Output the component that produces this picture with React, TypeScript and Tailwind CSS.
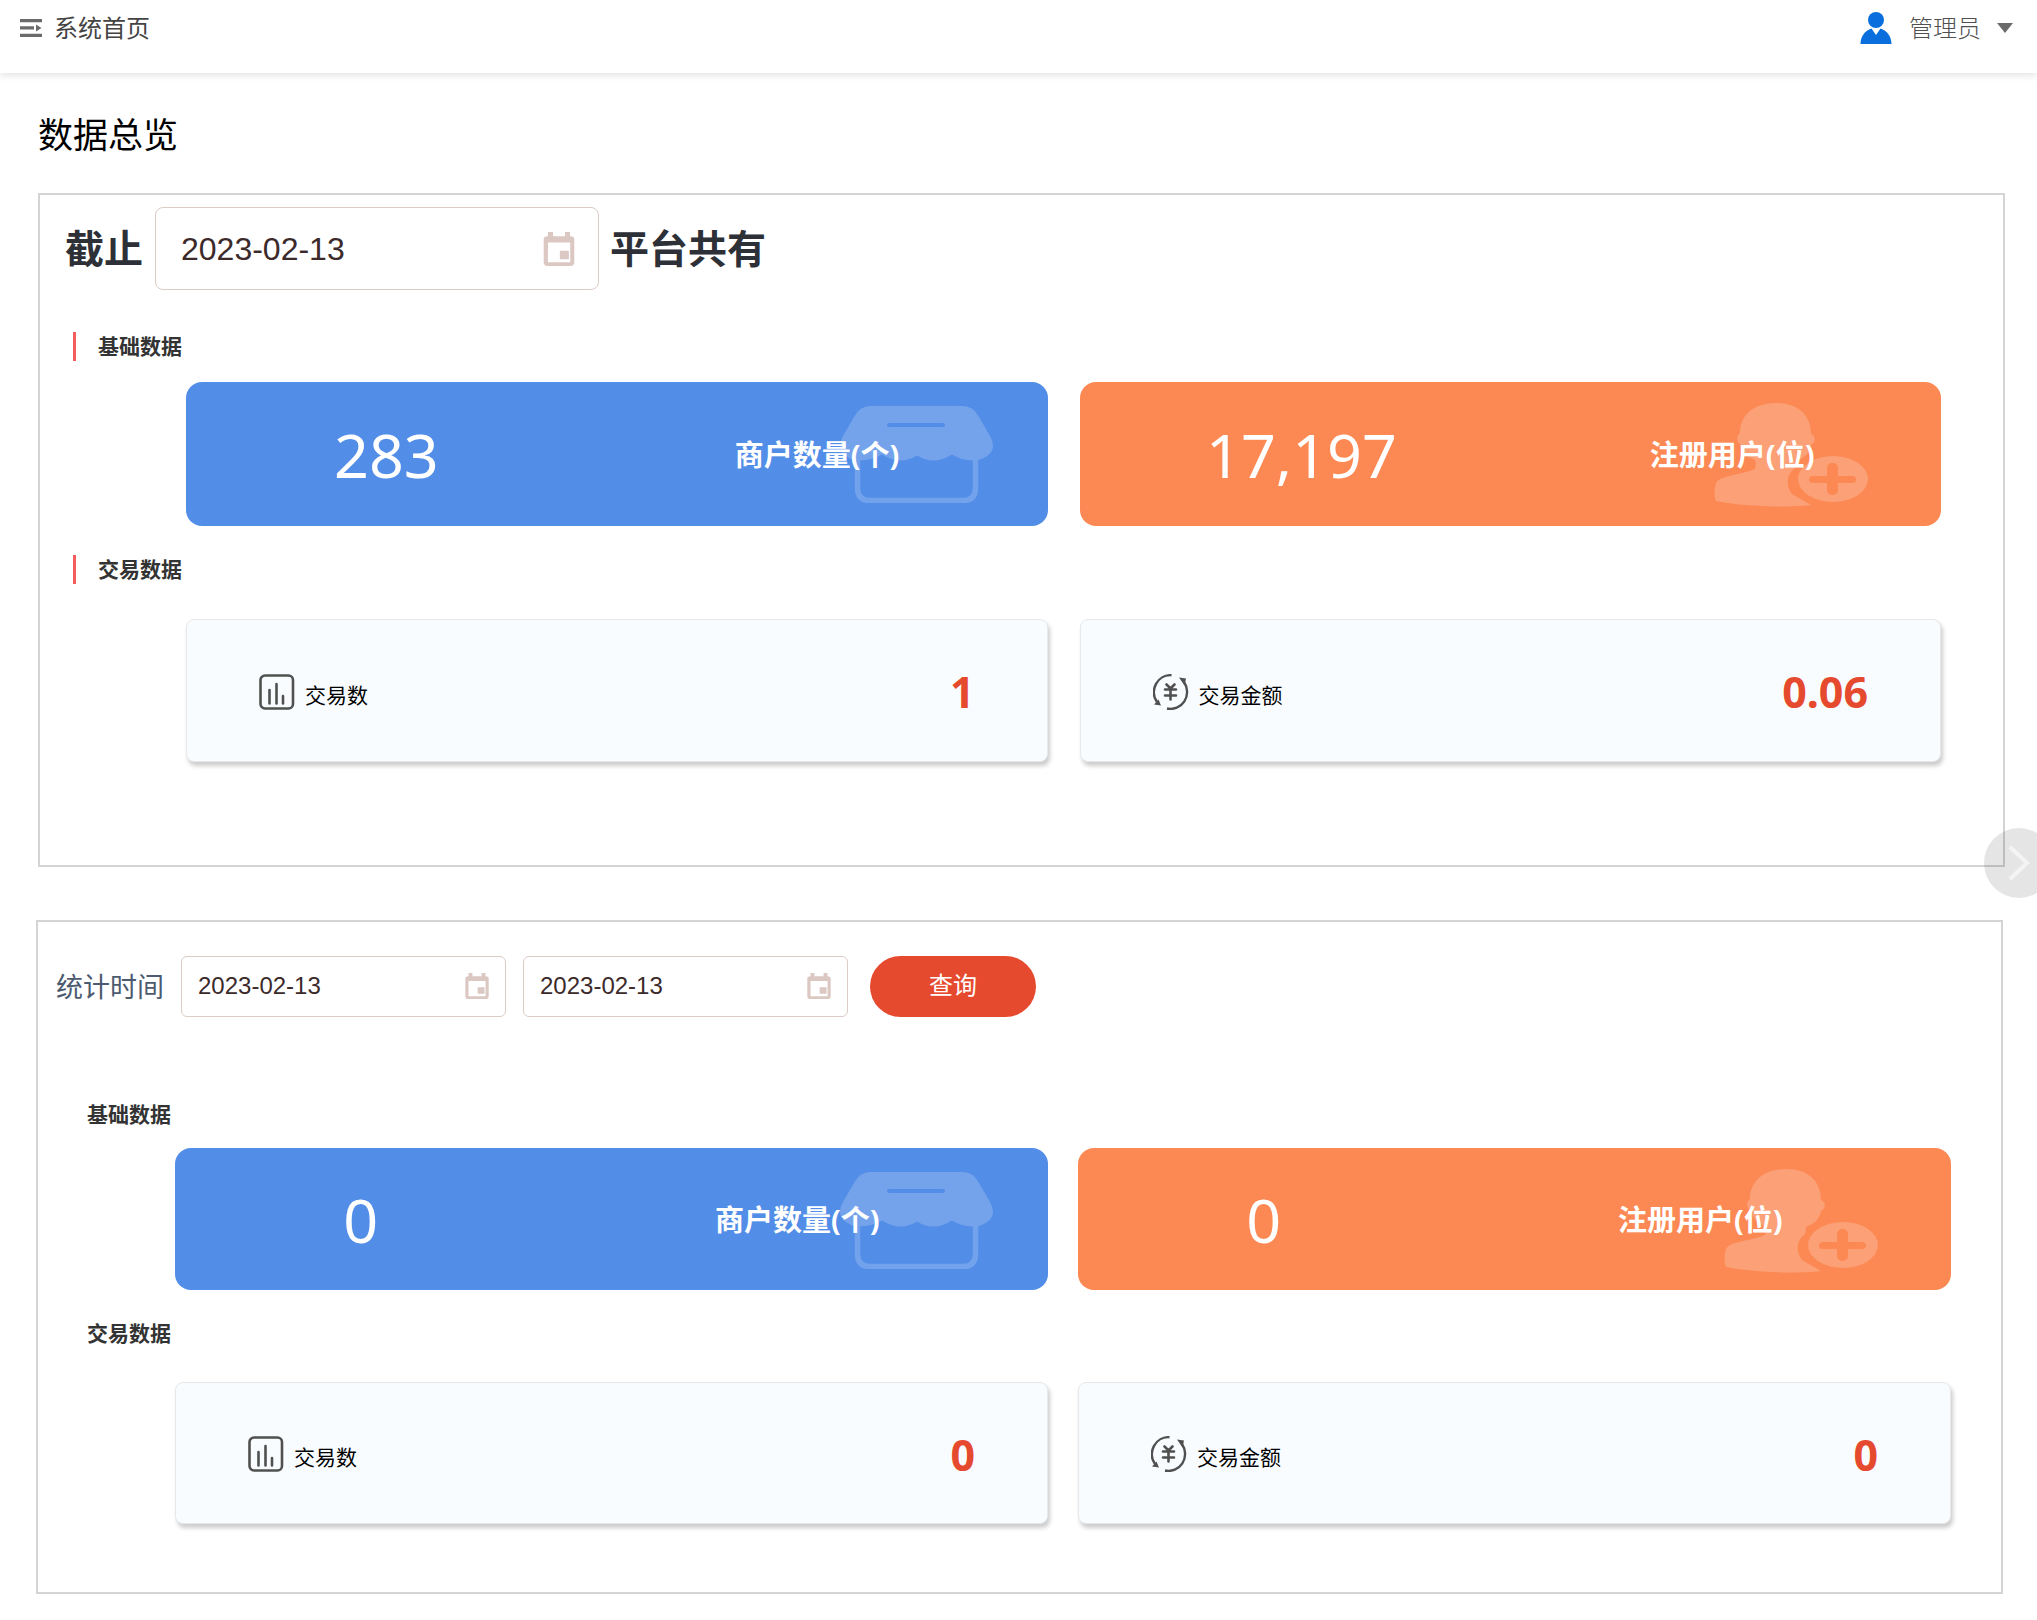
import { useState } from "react";

function MenuIcon() {
  return (
    <svg width="22" height="18" viewBox="0 0 22 18" fill="#6b6b6b" aria-hidden="true">
      <path d="M0 0h22v3.300H0zM0 7.300h14v3.300H0zM0 14.700h22V18H0zM16 5.500l5.500 3.500-5.500 3.500z" />
    </svg>
  );
}

function AvatarIcon() {
  return (
    <svg width="32" height="32" viewBox="0 0 32 32" fill="#0a6fdc" aria-hidden="true">
      <circle cx="16" cy="8" r="8" />
      <path d="M.5 32C.5 24.500 5 18.500 11.500 16.500L16 23l4.500-6.500C27 18.500 31.500 24.500 31.500 32z" />
    </svg>
  );
}

function CalendarIcon({ className }: { className: string }) {
  return (
    <svg className={className} viewBox="3 1 18 20" fill="#dcc8c2" aria-hidden="true">
      <path d="M17.800 12h-5.300v5h5.300zM15.500 1v2.500h-7V1H5.500v2.500H5c-1.100 0-2 .7-2 1.800V19c0 1.100.9 2 2 2h14c1.100 0 2-.9 2-2V5.300c0-1.100-.9-1.800-2-1.800h-.5V1zm3.100 17.800H5.500V7.200h13.100z" />
    </svg>
  );
}

function ShopArt() {
  return (
    <svg
      className="absolute top-6 right-[55px] h-[97px] w-[153px]"
      viewBox="0 0 153 97"
      aria-hidden="true"
    >
      <path
        d="M17.500 48V82Q17.500 94.500 30 94.500H123Q135.500 94.500 135.500 82V48"
        fill="none"
        stroke="#72a2eb"
        strokeWidth="5.500"
      />
      <path
        d="M30 0H123Q133 0 139 11L150 30Q153 35 153 40Q153 49 139 54Q124 56 112 48.500Q94 60 77 49.500Q60 60 42 48.500Q28 56 14 54Q0 49 0 40Q0 35 3 30L14 11Q20 0 30 0z"
        fill="#74a3ec"
      />
      <rect x="47" y="17" width="58" height="4" rx="2" fill="#528de7" />
    </svg>
  );
}

function UserArt() {
  return (
    <svg
      className="absolute top-[21px] right-[73px] h-[104px] w-[154px]"
      viewBox="0 0 154 104"
      aria-hidden="true"
    >
      <path
        d="M62 0C84 0 97 12 97 31C102 33 102 39 97 42C95 52 89 55 82 58C82 62 82 64 80 66C72 72 72 84 78 91L97 102Q84 103.500 62 103.500Q24 102.500 2 98Q-1 90 2 80C6 72 28 72 41 66C42 62 42 60 41 57C33 54 29 49 27 42C22 39 22 33 26 30C26 12 40 0 62 0z"
        fill="#fba077"
      />
      <ellipse cx="119" cy="76" rx="35" ry="23" fill="#fba077" />
      <rect x="95" y="73" width="47" height="7" rx="4" fill="#fc8953" />
      <rect x="113" y="60" width="11" height="32" rx="5" fill="#fc8953" />
    </svg>
  );
}

function CountIcon() {
  return (
    <svg width="36" height="36" viewBox="0 0 36 36" fill="none" stroke="#505050" aria-hidden="true">
      <rect x="1.500" y="1.500" width="32.500" height="33" rx="4.500" strokeWidth="2.600" />
      <path d="M10.500 16v13.500M17.500 10v19.500M24 22v7.500" strokeWidth="2.600" strokeLinecap="round" />
    </svg>
  );
}

function AmountIcon() {
  return (
    <svg width="36" height="36" viewBox="0 0 36 36" fill="none" stroke="#505050" aria-hidden="true">
      <path d="M18.500 1.200A16.500 17 0 0 0 4 28M14 34.500A16.500 17 0 0 0 31 8" strokeWidth="2.400" />
      <path d="M1 30.500L8 31.500L5.500 25.500zM26 3.500L33 4.500L31.500 11.500z" fill="#505050" stroke="none" />
      <path
        d="M13.500 10.500l4 4 4-4M12 15.500h11M12 21.500h11M17.500 14.500v11"
        strokeWidth="2.600"
        strokeLinecap="round"
      />
    </svg>
  );
}

function StatCard({
  value,
  label,
  kind,
  height,
}: {
  value: string;
  label: string;
  kind: "shop" | "user";
  height: string;
}) {
  const color = kind === "shop" ? "bg-[#528de7]" : "bg-[#fc8953]";
  return (
    <div className={`relative flex items-center justify-around rounded-2xl text-white ${color} ${height}`}>
      {kind === "shop" ? <ShopArt /> : <UserArt />}
      <span className="relative text-[61px] leading-none">{value}</span>
      <span className="relative pt-0.5 text-[29px] font-bold">{label}</span>
    </div>
  );
}

function TradeCard({
  value,
  label,
  kind,
  height,
}: {
  value: string;
  label: string;
  kind: "count" | "amount";
  height: string;
}) {
  return (
    <div
      className={`flex items-center justify-between rounded-lg border border-[#e6e8ea] bg-[#f9fcff] px-[72px] pt-0.5 shadow-[2px_4px_4px_rgba(0,0,0,0.2)] ${height}`}
    >
      <div className="flex items-center gap-2.5">
        {kind === "count" ? <CountIcon /> : <AmountIcon />}
        <span className="pt-2 text-[21px] text-black">{label}</span>
      </div>
      <span className="text-[43px] leading-none font-bold text-[#e64a2e]">{value}</span>
    </div>
  );
}

function DateField({
  id,
  label,
  large = false,
}: {
  id: string;
  label: string;
  large?: boolean;
}) {
  const [value, setValue] = useState("2023-02-13");
  return (
    <div
      className={
        large
          ? "flex h-[83px] w-[444px] items-center rounded-lg border border-[#dccbc6] pr-[23px] pl-[25px]"
          : "flex h-[61px] w-[325px] items-center rounded-md border border-[#dccbc6] px-4 pb-0.5"
      }
    >
      <input
        id={id}
        type="text"
        aria-label={label}
        value={value}
        onChange={(e) => setValue(e.target.value)}
        className={`min-w-0 flex-1 bg-transparent font-["Liberation_Sans",Arial,sans-serif] text-[#3c2a2a] outline-none ${
          large ? "text-[32px]" : "text-[24px]"
        }`}
      />
      <CalendarIcon className={large ? "h-[34px] w-8" : "h-[26px] w-6"} />
    </div>
  );
}

export default function App() {
  return (
    <div className='relative min-h-screen overflow-x-clip bg-white font-["Noto_Sans","Noto_Sans_CJK_SC",sans-serif] text-black'>
      <header className="flex h-[73px] items-center justify-between bg-white pr-6 pb-[18px] pl-5 shadow-[0_2px_8px_rgba(0,0,0,0.12)]">
        <div className="flex items-center gap-3">
          <button type="button" aria-label="菜单">
            <MenuIcon />
          </button>
          <span className="text-[24px] text-[#444444]">系统首页</span>
        </div>
        <button type="button" className="flex items-center">
          <AvatarIcon />
          <span className="ml-[17px] text-[24px] font-light text-[#505050]">管理员</span>
          <svg className="ml-4" width="16" height="10" viewBox="0 0 16 10" fill="#6b6b6b" aria-hidden="true">
            <path d="M0 0h16L8 10z" />
          </svg>
        </button>
      </header>

      <main className="pb-6">
        <h1 className="mt-10 ml-[38px] text-[35px] leading-[44px]">数据总览</h1>

        <section className="mt-9 mr-8 ml-[38px] border-2 border-[#d4d4d4] pt-3 pb-[103px]">
          <div className="flex items-center pl-[25px] text-[39px] font-bold text-[#2e3038]">
            <label htmlFor="until">截止</label>
            <div className="mr-[11px] ml-3 font-normal">
              <DateField id="until" label="截止日期" large />
            </div>
            <span>平台共有</span>
          </div>

          <h2 className="mt-[42px] ml-[33px] border-l-[3px] border-[#f25e5e] pl-[22px] text-[21px] leading-[29px] font-bold text-[#333333]">
            基础数据
          </h2>
          <div className="mt-[21px] mr-[62px] ml-[146px] grid grid-cols-2 gap-8">
            <StatCard kind="shop" value="283" label="商户数量(个)" height="h-36" />
            <StatCard kind="user" value="17,197" label="注册用户(位)" height="h-36" />
          </div>

          <h2 className="mt-[29px] ml-[33px] border-l-[3px] border-[#f25e5e] pl-[22px] text-[21px] leading-[29px] font-bold text-[#333333]">
            交易数据
          </h2>
          <div className="mt-[35px] mr-[62px] ml-[146px] grid grid-cols-2 gap-8">
            <TradeCard kind="count" value="1" label="交易数" height="h-[143px]" />
            <TradeCard kind="amount" value="0.06" label="交易金额" height="h-[143px]" />
          </div>
        </section>

        <section className="mt-[53px] mr-[34px] ml-9 border-2 border-[#d4d4d4] pt-[34px] pb-[68px]">
          <div className="flex items-center pl-[18px]">
            <label htmlFor="from" className="mr-[17px] pt-0.5 text-[27px] text-[#4c5b70]">
              统计时间
            </label>
            <div className="flex items-center gap-[17px]">
              <DateField id="from" label="开始日期" />
              <DateField id="to" label="结束日期" />
            </div>
            <button
              type="button"
              className="ml-[22px] h-[61px] w-[166px] rounded-full bg-[#e64a2e] pb-1 text-[24px] text-white"
            >
              查询
            </button>
          </div>

          <h2 className="mt-[83px] ml-[49px] text-[21px] leading-[29px] font-bold text-[#333333]">基础数据</h2>
          <div className="mt-[19px] mr-[50px] ml-[137px] grid grid-cols-2 gap-[30px]">
            <StatCard kind="shop" value="0" label="商户数量(个)" height="h-[142px]" />
            <StatCard kind="user" value="0" label="注册用户(位)" height="h-[142px]" />
          </div>

          <h2 className="mt-[29px] ml-[49px] text-[21px] leading-[29px] font-bold text-[#333333]">交易数据</h2>
          <div className="mt-[34px] mr-[50px] ml-[137px] grid grid-cols-2 gap-[30px]">
            <TradeCard kind="count" value="0" label="交易数" height="h-[142px]" />
            <TradeCard kind="amount" value="0" label="交易金额" height="h-[142px]" />
          </div>
        </section>
      </main>

      <button
        type="button"
        aria-label="下一页"
        className="absolute top-[828px] -right-[17px] flex size-[70px] items-center rounded-full bg-black/10 pl-6"
      >
        <svg width="22" height="36" viewBox="0 0 22 36" fill="none" stroke="#f4f4f4" strokeWidth="4" aria-hidden="true">
          <path d="M2 2l17 16L2 34" />
        </svg>
      </button>
    </div>
  );
}
